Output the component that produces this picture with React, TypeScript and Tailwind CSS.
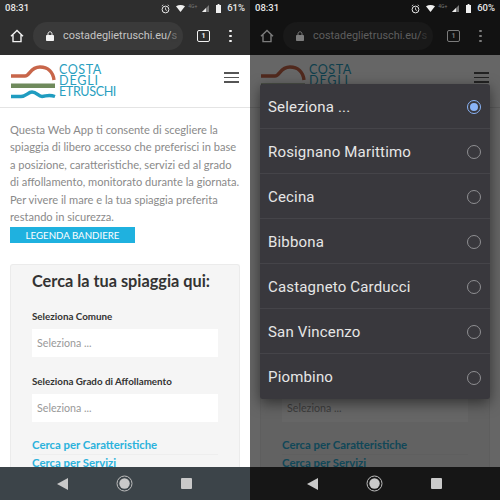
import React from "react";

const Logo = () => (
  <div className="flex items-start">
    <svg width="45" height="34" viewBox="0 0 45 34" className="shrink-0">
      <path d="M0 11 H14 C19 11 19 2 29 2 C37 2 42 7 43 15" fill="none" stroke="#c8664a" strokeWidth="3.4" />
      <rect x="0" y="18.5" width="44" height="4.5" fill="#6f8a5c" />
      <path d="M0 31.5 H10 C15 31.5 17 27 21 27 C26 27 27 31.5 31 31.5 C35 31.5 37 29 44 31.5" fill="none" stroke="#1f9cc0" strokeWidth="3.4" />
    </svg>
    <div className="ml-[3px] -mt-[1.5px] font-['Lato',sans-serif] font-normal text-[#2a9fc0] text-[12.6px] leading-[11.4px]">
      <div className="tracking-[0.5px]">COSTA</div>
      <div className="tracking-[0.8px]">DEGLI</div>
      <div className="tracking-[-0.4px]">ETRUSCHI</div>
    </div>
  </div>
);

const Page = () => (
  <div className="flex h-full flex-col bg-white font-['Lato',sans-serif]">
    <div className="flex h-[53px] shrink-0 items-center justify-between border-b border-[#e4e4e4] px-[11px]">
      <div className="mt-[2px]"><Logo /></div>
      <div className="mb-[7px] flex w-[15px] flex-col gap-[3px]">
        <div className="h-[1.5px] bg-[#555]" />
        <div className="h-[1.5px] bg-[#555]" />
        <div className="h-[1.5px] bg-[#555]" />
      </div>
    </div>
    <div className="px-[10px] pt-[13px] text-[11.1px] leading-[17.4px] text-[#8a8a8a] whitespace-nowrap">
      <p>Questa Web App ti consente di scegliere la</p>
      <p>spiaggia di libero accesso che preferisci in base</p>
      <p>a posizione, caratteristiche, servizi ed al grado</p>
      <p>di affollamento, monitorato durante la giornata.</p>
      <p>Per vivere il mare e la tua spiaggia preferita</p>
      <p>restando in sicurezza.</p>
    </div>
    <div className="mx-[10px] mt-[1.5px] flex h-[16px] w-[125px] shrink-0 items-center justify-center bg-[#1fb1df] text-[9.7px] text-white">
      LEGENDA BANDIERE
    </div>
    <div className="mx-[10px] mt-[21px] flex-1 rounded-t-[3px] border border-b-0 border-[#ebebeb] bg-[#f5f5f5] px-[21px] pt-[4px]">
      <h2 className="text-[16.3px] font-bold leading-[24px] text-[#333] whitespace-nowrap">Cerca la tua spiaggia qui:</h2>
      <div className="mt-[17px] text-[9.8px] font-bold leading-[12px] text-[#333]">Seleziona Comune</div>
      <div className="mt-[7px] flex h-[28px] items-center bg-white px-[5px] text-[10.7px] text-[#999]">Seleziona ...</div>
      <div className="mt-[18px] text-[9.8px] font-bold leading-[12px] text-[#333]">Seleziona Grado di Affollamento</div>
      <div className="mt-[7px] flex h-[28px] items-center bg-white px-[5px] text-[10.7px] text-[#999]">Seleziona ...</div>
      <div className="mt-[16.5px] border-b border-[#eee] pb-[1.5px] text-[11.35px] font-bold leading-[14px] text-[#2bb2dc]">Cerca per Caratteristiche</div>
      <div className="mt-[1.5px] text-[11.35px] font-bold leading-[14px] text-[#2bb2dc]">Cerca per Servizi</div>
    </div>
  </div>
);

const StatusBar = ({ battery, dim }: { battery: string; dim: boolean }) => (
  <div className={`flex h-[17px] shrink-0 items-center justify-between px-[5px] font-['Roboto',sans-serif] text-[9.5px] font-medium text-[#e8e8e8] ${dim ? "bg-[#121212]" : "bg-[#2e2e2e]"}`}>
    <span>08:31</span>
    <div className="flex items-center">
      <svg width="9" height="10" viewBox="0 0 9 10"><circle cx="4.5" cy="5.5" r="3.4" fill="none" stroke="#e8e8e8" strokeWidth="1" /><path d="M4.5 3.5V5.7L6 6.5M0.8 2L2.3 0.8M8.2 2L6.7 0.8" stroke="#e8e8e8" strokeWidth="0.8" fill="none" /></svg>
      <svg className="ml-[6px]" width="9" height="7" viewBox="0 0 9 7"><path d="M0 1.2C2.7-.4 6.3-.4 9 1.2L4.5 7Z" fill="#f0f0f0" /></svg>
      <span className="ml-[3px] -mt-[4px] w-[12px] text-[5px] font-normal text-[#777]">4G+</span>
      <svg className="ml-[2px]" width="7" height="7" viewBox="0 0 7 7"><path d="M7 0V7H0Z" fill="#777" /><path d="M4 3V7H0Z" fill="#eee" /></svg>
      <svg className="ml-[7px]" width="5" height="9" viewBox="0 0 5 9"><path d="M1.6 0H3.4V1H5V9H0V1H1.6Z" fill="#f0f0f0" /></svg>
      <span className="ml-[6px]">{battery}</span>
    </div>
  </div>
);

const Toolbar = ({ dim }: { dim: boolean }) => {
  const c = dim ? "#7c7c7c" : "#f2f2f2";
  return (
    <div className={`flex h-[38px] shrink-0 items-center ${dim ? "bg-[#121212]" : "bg-[#2e2e2e]"}`}>
      <svg className="ml-[10px] shrink-0" width="14" height="14" viewBox="0 0 14 14"><path d="M1 7.2L7 1.4L13 7.2M3 6V12.6H11V6" fill="none" stroke={c} strokeWidth="1.4" /></svg>
      <div className={`ml-[9px] flex h-[28px] w-[150px] shrink-0 items-center overflow-hidden rounded-full pl-[13px] ${dim ? "bg-[#191919]" : "bg-[#3a3a3a]"}`}>
        <svg className="shrink-0" width="8" height="10" viewBox="0 0 8 10"><path d="M2 4V2.8C2 1.5 2.9.8 4 .8S6 1.5 6 2.8V4" fill="none" stroke={c} strokeWidth="1" /><rect y="4" width="8" height="6" rx=".8" fill={c} /></svg>
        <span className={`ml-[9px] whitespace-nowrap font-['Roboto',sans-serif] text-[10.9px] ${dim ? "text-[#5e5e5e]" : "text-[#c4c4c4]"}`}>costadeglietruschi.eu/<span className="opacity-40">s</span></span>
      </div>
      <div className="ml-[14px] flex h-[12px] w-[13px] shrink-0 items-center justify-center rounded-[2px] border-[1.5px] font-['Roboto',sans-serif] text-[7px] font-bold" style={{ borderColor: c, color: c }}>1</div>
      <div className="ml-[19px] flex shrink-0 flex-col gap-[2.5px]">
        <div className="h-[2.5px] w-[2.5px] rounded-full" style={{ background: c }} />
        <div className="h-[2.5px] w-[2.5px] rounded-full" style={{ background: c }} />
        <div className="h-[2.5px] w-[2.5px] rounded-full" style={{ background: c }} />
      </div>
    </div>
  );
};

const NavBar = ({ dim }: { dim: boolean }) => (
  <div className={`flex h-[33px] shrink-0 items-center ${dim ? "bg-[#161616]" : "bg-[#3c4449]"}`}>
    <svg className="ml-[57px]" width="11" height="12" viewBox="0 0 11 12"><path d="M11 0V12L0 6Z" fill="#c9c9c9" /></svg>
    <svg className="ml-[48px]" width="17" height="17" viewBox="0 0 17 17"><circle cx="8.5" cy="8.5" r="7.5" fill="none" stroke="#bdbdbd" strokeWidth="1" /><circle cx="8.5" cy="8.5" r="5.2" fill="#c9c9c9" /></svg>
    <div className="ml-[48px] h-[11px] w-[11px] rounded-[1px] bg-[#c9c9c9]" />
  </div>
);

const items = ["Seleziona ...", "Rosignano Marittimo", "Cecina", "Bibbona", "Castagneto Carducci", "San Vincenzo", "Piombino"];

const Dialog = () => (
  <div className="absolute left-[10px] top-[84px] w-[230px] overflow-hidden rounded-[3px] bg-[#39383d] font-['Roboto',sans-serif] shadow-[0_4px_14px_rgba(0,0,0,0.5)]">
    {items.map((t, i) => (
      <div key={t} className={`flex h-[45px] items-center justify-between pl-[8px] pr-[9px] pt-[2px] text-[15px] tracking-[0.17px] text-[#e6e6e6] ${i < items.length - 1 ? "border-b border-[#454449]" : ""}`}>
        <span>{t}</span>
        {i === 0 ? (
          <div className="flex h-[14px] w-[14px] items-center justify-center rounded-full border-[1.5px] border-[#8ab4f8]">
            <div className="h-[8px] w-[8px] rounded-full bg-[#8ab4f8]" />
          </div>
        ) : (
          <div className="h-[14px] w-[14px] rounded-full border-[1.5px] border-[#8f8f92]" />
        )}
      </div>
    ))}
  </div>
);

const Phone = ({ battery, dim }: { battery: string; dim: boolean }) => (
  <div className="relative flex h-[500px] w-[250px] flex-col overflow-hidden">
    <StatusBar battery={battery} dim={dim} />
    <Toolbar dim={dim} />
    <div className="relative min-h-0 flex-1 overflow-hidden">
      <Page />
      {dim && <div className="absolute inset-0 bg-black/60" />}
    </div>
    <NavBar dim={dim} />
    {dim && <Dialog />}
  </div>
);

export default function App() {
  return (
    <div className="flex h-[500px] w-[500px] overflow-hidden">
      <Phone battery="61%" dim={false} />
      <Phone battery="60%" dim={true} />
    </div>
  );
}
